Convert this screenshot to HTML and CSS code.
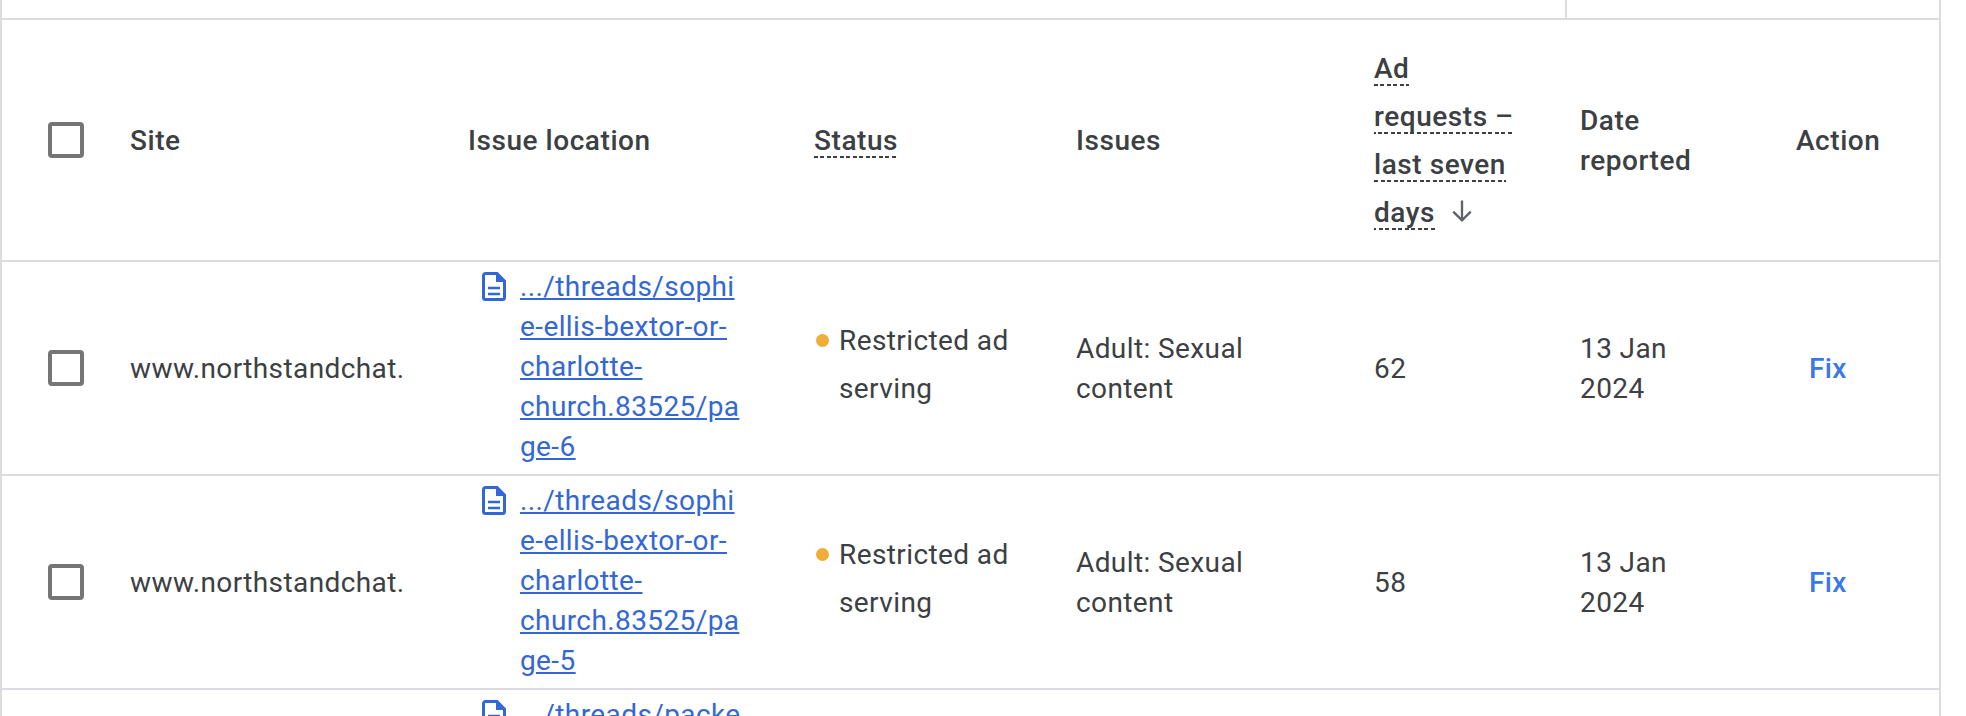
FILE: index.html
```html
<!DOCTYPE html>
<html lang="en">
<head>
<meta charset="utf-8">
<title>Policy issues</title>
<link rel="stylesheet" href="styles.css">
</head>
<body>
<div class="frame">
  <div class="strip"><div class="strip-main"></div><div class="strip-side"></div></div>
  <table class="issues">
    <colgroup>
      <col class="c-check"><col class="c-site"><col class="c-loc"><col class="c-status"><col class="c-issues"><col class="c-req"><col class="c-date"><col class="c-action">
    </colgroup>
    <thead>
      <tr>
        <th class="check"><span class="box"></span></th>
        <th>Site</th>
        <th>Issue location</th>
        <th class="tall"><span class="dashed">Status</span></th>
        <th>Issues</th>
        <th class="tall req"><span class="dashed">Ad requests – last seven days</span><svg class="sort" viewBox="0 0 24 24"><path d="M12 3v17M4.500 12.500 12 20l7.500-7.500" fill="none" stroke="currentColor" stroke-width="2"/></svg></th>
        <th class="date">Date reported</th>
        <th>Action</th>
      </tr>
    </thead>
    <tbody>
      <tr>
        <td class="check"><span class="box"></span></td>
        <td class="site">www.northstandchat.</td>
        <td class="loc"><div class="loc-in"><svg class="doc" viewBox="0 0 24 29"><path d="M3.500 1.500H15L22.500 9v16.500a2 2 0 0 1-2 2h-17a2 2 0 0 1-2-2v-22a2 2 0 0 1 2-2Z" fill="none" stroke="currentColor" stroke-width="3"/><path d="M14 2v8h8Z" fill="currentColor"/><path d="M6 16h12M6 22h12" stroke="currentColor" stroke-width="2.500"/></svg><a href="#">.../threads/sophi<wbr>e-ellis-bextor-or-<wbr>charlotte-<wbr>church.83525/pa<wbr>ge-6</a></div></td>
        <td class="status"><span class="dot"></span><span class="status-text">Restricted ad serving</span></td>
        <td class="issue">Adult: Sexual content</td>
        <td>62</td>
        <td class="date">13 Jan 2024</td>
        <td><a class="fix" href="#">Fix</a></td>
      </tr>
      <tr>
        <td class="check"><span class="box"></span></td>
        <td class="site">www.northstandchat.</td>
        <td class="loc"><div class="loc-in"><svg class="doc" viewBox="0 0 24 29"><path d="M3.500 1.500H15L22.500 9v16.500a2 2 0 0 1-2 2h-17a2 2 0 0 1-2-2v-22a2 2 0 0 1 2-2Z" fill="none" stroke="currentColor" stroke-width="3"/><path d="M14 2v8h8Z" fill="currentColor"/><path d="M6 16h12M6 22h12" stroke="currentColor" stroke-width="2.500"/></svg><a href="#">.../threads/sophi<wbr>e-ellis-bextor-or-<wbr>charlotte-<wbr>church.83525/pa<wbr>ge-5</a></div></td>
        <td class="status"><span class="dot"></span><span class="status-text">Restricted ad serving</span></td>
        <td class="issue">Adult: Sexual content</td>
        <td>58</td>
        <td class="date">13 Jan 2024</td>
        <td><a class="fix" href="#">Fix</a></td>
      </tr>
      <tr>
        <td class="check"><span class="box"></span></td>
        <td class="site">www.northstandchat.</td>
        <td class="loc"><div class="loc-in"><svg class="doc" viewBox="0 0 24 29"><path d="M3.500 1.500H15L22.500 9v16.500a2 2 0 0 1-2 2h-17a2 2 0 0 1-2-2v-22a2 2 0 0 1 2-2Z" fill="none" stroke="currentColor" stroke-width="3"/><path d="M14 2v8h8Z" fill="currentColor"/><path d="M6 16h12M6 22h12" stroke="currentColor" stroke-width="2.500"/></svg><a href="#">.../threads/packe<wbr>rs-and-more-<wbr>general-<wbr>chat.83525/pa<wbr>ge-4</a></div></td>
        <td class="status"><span class="dot"></span><span class="status-text">Restricted ad serving</span></td>
        <td class="issue">Adult: Sexual content</td>
        <td>51</td>
        <td class="date">13 Jan 2024</td>
        <td><a class="fix" href="#">Fix</a></td>
      </tr>
    </tbody>
  </table>
</div>
</body>
</html>
```
FILE: styles.css
```css
html, body {
  margin: 0;
  height: 716px;
  overflow: hidden;
  background: #fff;
}
body {
  font-family: Roboto, sans-serif;
  color: #3c4043;
}
.frame {
  width: 1937px;
  border-left: 2px solid #dadce0;
  border-right: 2px solid #dadce0;
}
.strip {
  display: flex;
  height: 18px;
  border-bottom: 2px solid #dadce0;
}
.strip-main {
  width: 1563px;
  border-right: 2px solid #dadce0;
}
.strip-side { flex: 1; }
.issues {
  width: 100%;
  table-layout: fixed;
  border-collapse: collapse;
  font-size: 28px;
  letter-spacing: 0.4px;
}
.c-check { width: 128px; }
.c-site { width: 338px; }
.c-loc { width: 346px; }
.c-status { width: 262px; }
.c-issues { width: 298px; }
.c-req { width: 206px; }
.c-date { width: 216px; }
thead tr { height: 241px; }
tbody tr { height: 214px; }
tr { border-bottom: 2px solid #dadce0; }
th, td {
  padding: 2px 0 0;
  vertical-align: middle;
  text-align: left;
  line-height: 40px;
}
th {
  font-weight: 500;
  letter-spacing: 0.55px;
}
th.tall { line-height: 48px; padding-right: 30px; }
th.req { padding-right: 54px; }
.date { padding-right: 60px; }
.issue { padding-right: 60px; }
.site { white-space: nowrap; overflow: hidden; }
td.check, th.check { padding: 0 0 0 46px; }
.box {
  display: block;
  box-sizing: border-box;
  width: 36px;
  height: 36px;
  border: 4px solid #757575;
  border-radius: 4px;
}
.dashed {
  padding-bottom: 1px;
  background: repeating-linear-gradient(90deg, #3c4043 0 4px, transparent 4px 6.5px) left bottom / 100% 2px no-repeat;
}
.sort {
  width: 28px;
  height: 28px;
  margin-left: 13px;
  vertical-align: -3px;
  color: #5f6368;
}
td.loc { padding: 0 0 2px; }
.loc-in {
  display: flex;
  gap: 14px;
  align-items: flex-start;
  padding-left: 14px;
}
.doc {
  flex: none;
  width: 24px;
  height: 29px;
  margin-top: 5px;
  color: #3367d6;
}
.loc a {
  color: #3367d6;
  width: 224px;
  overflow-wrap: anywhere;
}
.status { line-height: 48px; }
.status-text { display: block; padding-left: 25px; padding-right: 20px; margin-top: -8px; }
.dot {
  float: left;
  width: 13px;
  height: 13px;
  margin: 9px 0 0 2px;
  border-radius: 50%;
  background: #f0ad37;
}
.fix {
  margin-left: 13px;
  color: #3b78e7;
  font-weight: 500;
  text-decoration: none;
}
```
